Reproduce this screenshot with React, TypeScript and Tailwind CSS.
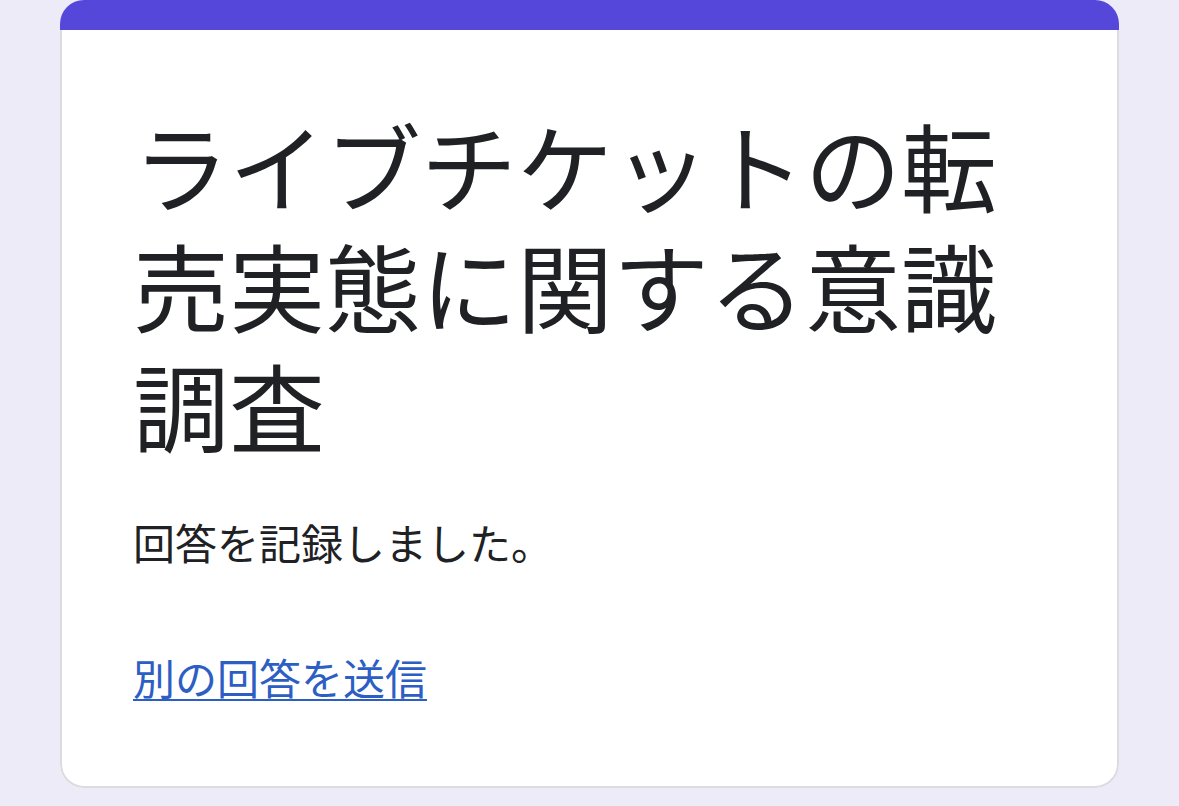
export default function App() {
  return (
    <div
      className="min-h-screen w-full bg-[#eeebf9] px-[60px]"
      style={{ fontFamily: '"Noto Sans CJK JP", "Noto Sans", sans-serif' }}
    >
      <div className="overflow-hidden rounded-[24px]">
        <div className="h-[30px] bg-[#5447d9]" />
        <div className="rounded-b-[24px] border-x-2 border-b-2 border-[#dadce0] bg-white pl-[71px] pr-[60px] pt-[74px] pb-[81px]">
          <h1 className="text-[96px] leading-[120px] font-normal text-[#202124]">
            ライブチケットの転売実態に関する意識調査
          </h1>
          <p className="mt-[50px] text-[42px] leading-[56px] text-[#202124]">
            回答を記録しました。
          </p>
          <a
            href="#"
            className="mt-[79px] block w-fit text-[42px] leading-[56px] text-[#2c5ec4] underline decoration-2 underline-offset-[4px]"
          >
            別の回答を送信
          </a>
        </div>
      </div>
    </div>
  );
}
